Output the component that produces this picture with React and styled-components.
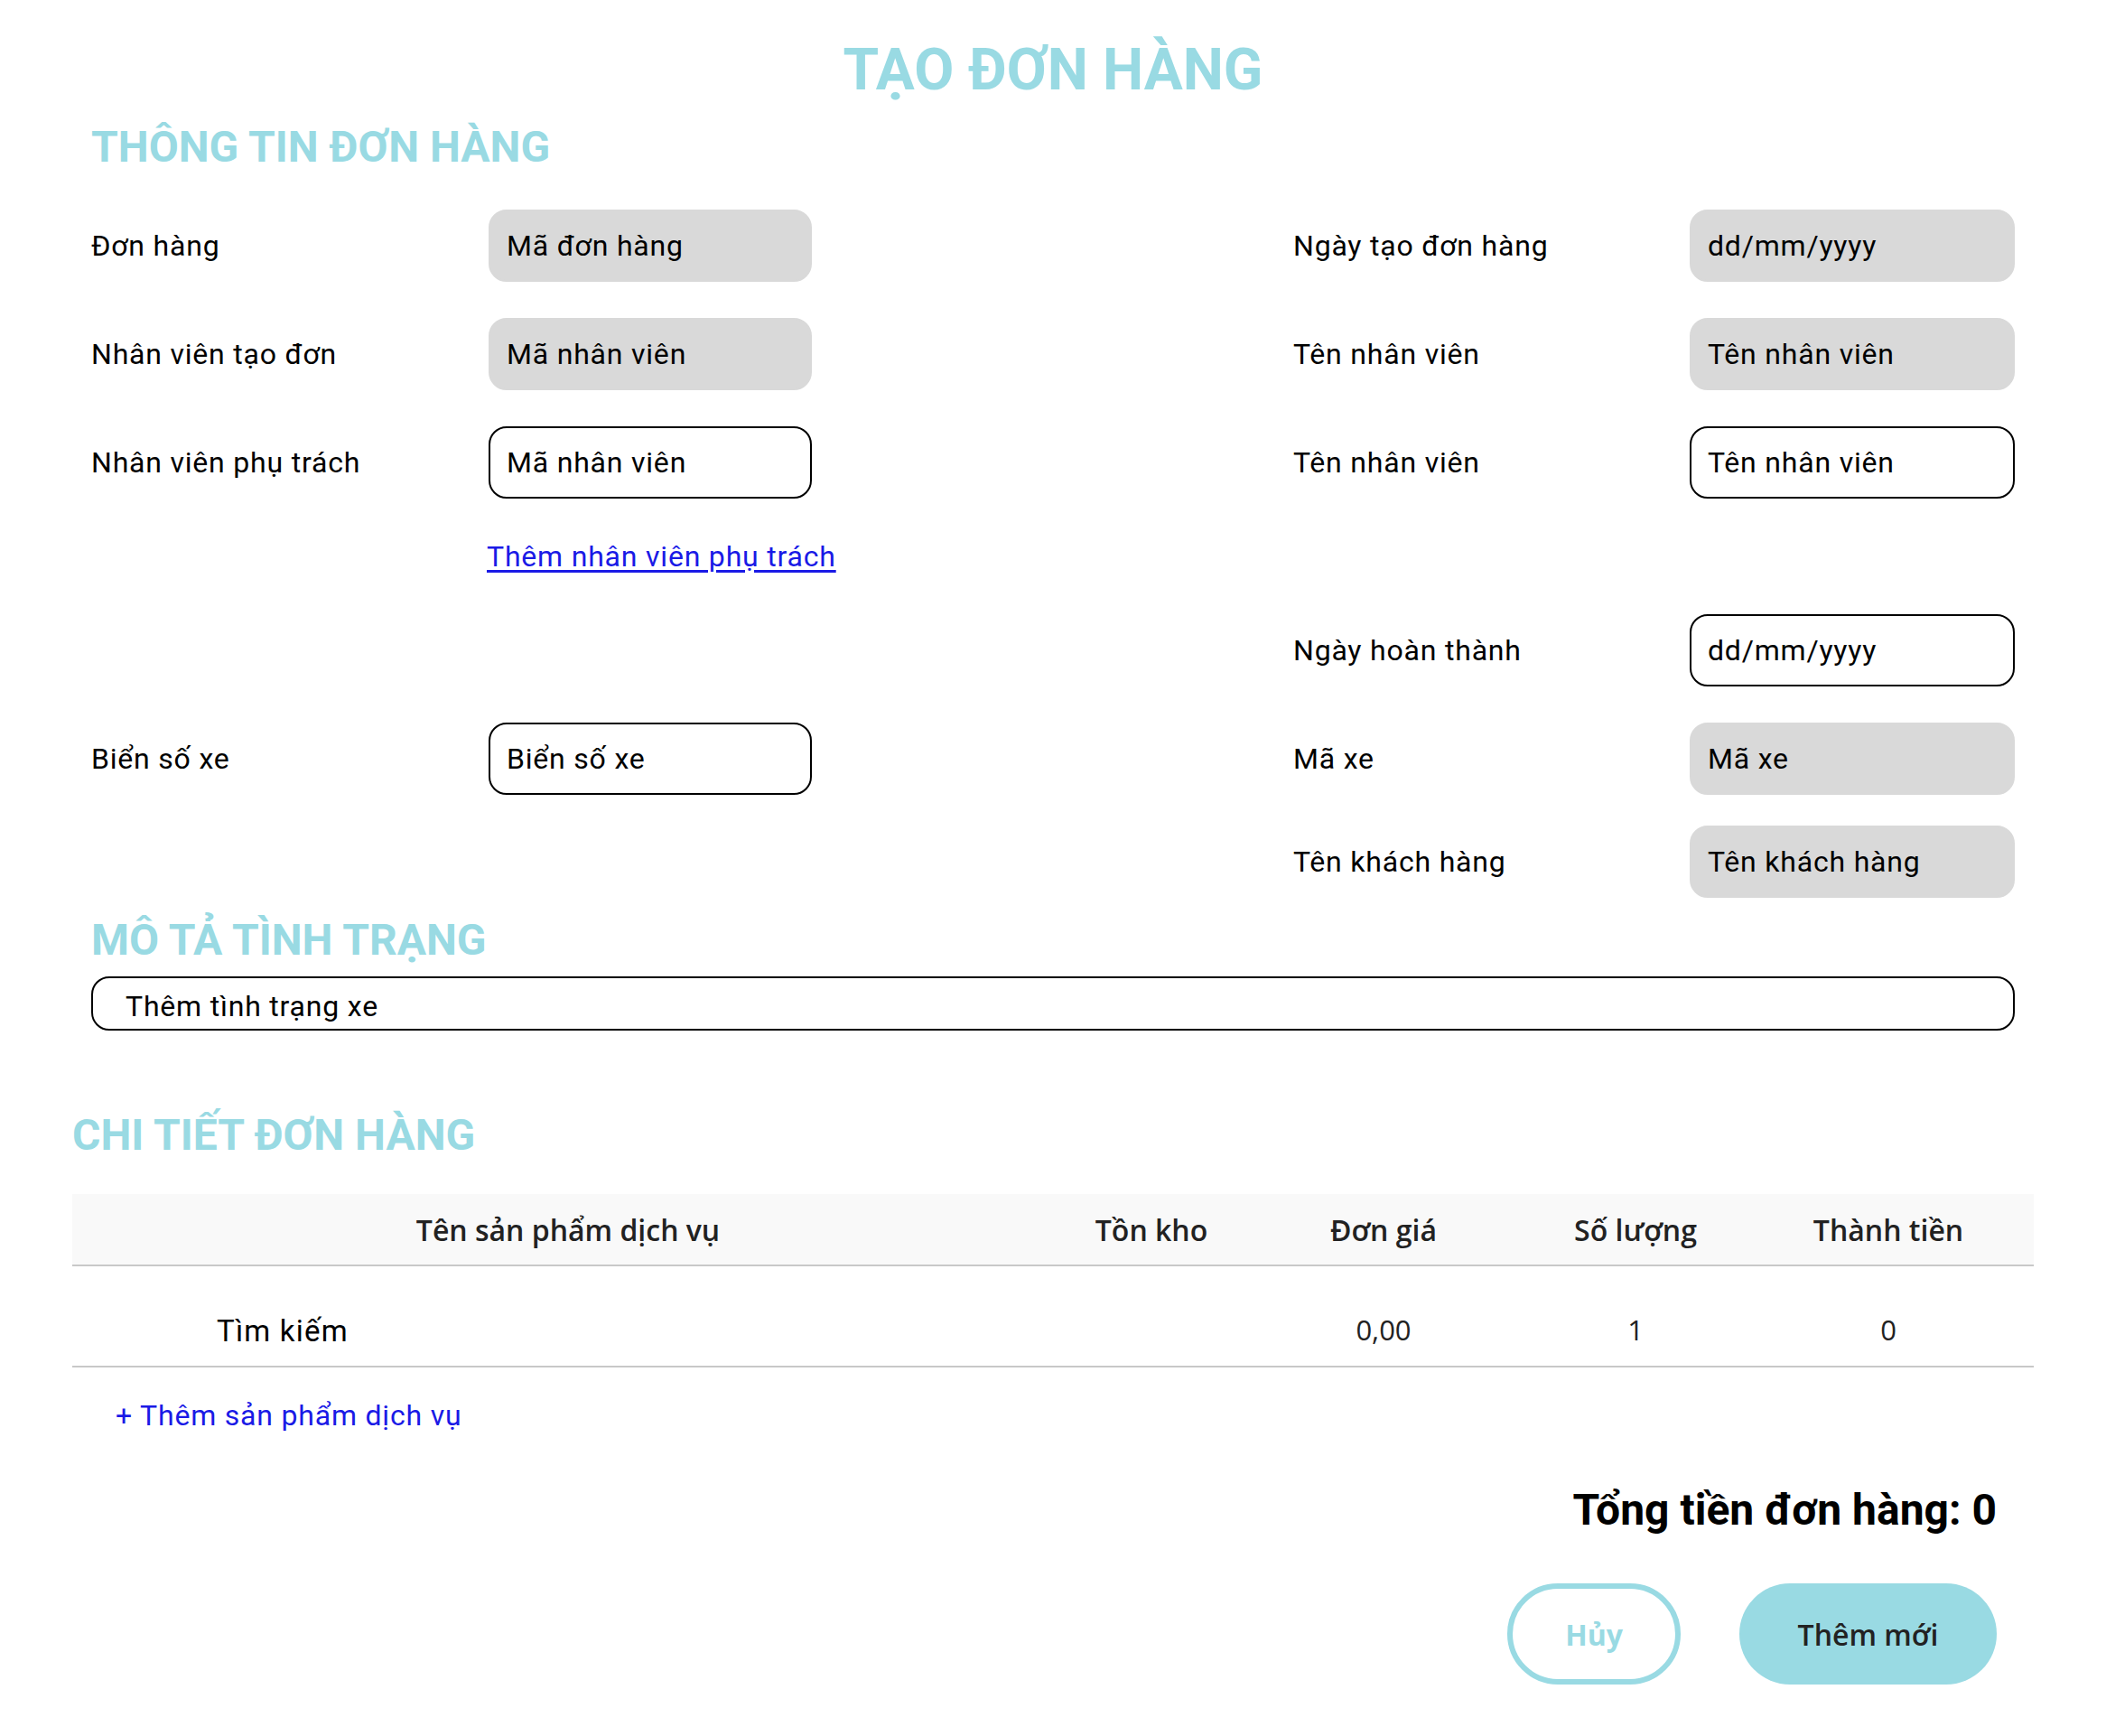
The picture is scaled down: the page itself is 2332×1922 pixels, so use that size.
import styled, { createGlobalStyle } from "styled-components";

const GlobalStyle = createGlobalStyle`
  body {
    margin: 0;
    background: #ffffff;
    font-family: Roboto, "Liberation Sans", sans-serif;
    color: #000;
  }
`;

const TEAL = "#99dae3";

const leftRows = [
    {label: "Đơn hàng", placeholder: "Mã đơn hàng", filled: true},
    {label: "Nhân viên tạo đơn", placeholder: "Mã nhân viên", filled: true},
    {label: "Nhân viên phụ trách", placeholder: "Mã nhân viên"},
];

const rightRows = [
    {label: "Ngày tạo đơn hàng", placeholder: "dd/mm/yyyy", filled: true},
    {label: "Tên nhân viên", placeholder: "Tên nhân viên", filled: true},
    {label: "Tên nhân viên", placeholder: "Tên nhân viên"},
];

const columns = ["Tên sản phẩm dịch vụ", "Tồn kho", "Đơn giá", "Số lượng", "Thành tiền"];

export default function App() {
    return (
        <Page>
            <GlobalStyle/>
            <Title>TẠO ĐƠN HÀNG</Title>

            <InfoSection>
                <SectionTitle $top={29}>THÔNG TIN ĐƠN HÀNG</SectionTitle>

                {leftRows.map((row, i) => (
                    <FormRow key={i} $top={i === 0 ? 45 : 40}>
                        <Label>{row.label}</Label>
                        <Field $filled={row.filled}>{row.placeholder}</Field>
                        <span/>
                        <Label>{rightRows[i].label}</Label>
                        <Field $filled={rightRows[i].filled}>{rightRows[i].placeholder}</Field>
                    </FormRow>
                ))}

                <LinkRow>
                    <span/>
                    <AddStaffLink href="#">Thêm nhân viên phụ trách</AddStaffLink>
                </LinkRow>

                <FormRow $top={40}>
                    <span/>
                    <span/>
                    <span/>
                    <Label>Ngày hoàn thành</Label>
                    <Field>dd/mm/yyyy</Field>
                </FormRow>

                <FormRow $top={40}>
                    <Label>Biển số xe</Label>
                    <Field>Biển số xe</Field>
                    <span/>
                    <Label>Mã xe</Label>
                    <Field $filled>Mã xe</Field>
                </FormRow>

                <FormRow $top={34}>
                    <span/>
                    <span/>
                    <span/>
                    <Label>Tên khách hàng</Label>
                    <Field $filled>Tên khách hàng</Field>
                </FormRow>

                <SectionTitle $top={23}>MÔ TẢ TÌNH TRẠNG</SectionTitle>
                <DescBox>Thêm tình trạng xe</DescBox>
            </InfoSection>

            <SectionTitle $top={92}>CHI TIẾT ĐƠN HÀNG</SectionTitle>

            <Table>
                <HeadRow>
                    {columns.map(c => <HeadCell key={c}>{c}</HeadCell>)}
                </HeadRow>
                <BodyRow>
                    <SearchCell>Tìm kiếm</SearchCell>
                    <ValueCell/>
                    <ValueCell>0,00</ValueCell>
                    <ValueCell>1</ValueCell>
                    <ValueCell>0</ValueCell>
                </BodyRow>
            </Table>

            <AddItem>+ Thêm sản phẩm dịch vụ</AddItem>

            <Footer>
                <Total>Tổng tiền đơn hàng: 0</Total>
                <Actions>
                    <CancelButton>Hủy</CancelButton>
                    <SubmitButton>Thêm mới</SubmitButton>
                </Actions>
            </Footer>
        </Page>
    );
}

const Page = styled.div`
  width: 2172px;
  margin: 0 auto;
  padding-bottom: 56px;
`

const Title = styled.h1`
  margin: 46px 0 0;
  text-align: center;
  font-size: 64px;
  line-height: 1;
  font-weight: 700;
  color: ${TEAL};
`

const InfoSection = styled.section`
  padding: 0 21px;
`

const SectionTitle = styled.h2`
  margin: ${p => p.$top}px 0 0;
  font-size: 48px;
  line-height: 1;
  font-weight: 700;
  color: ${TEAL};
`

const FormRow = styled.div`
  display: grid;
  grid-template-columns: 440px 358px 1fr 439px 360px;
  align-items: center;
  height: 80px;
  margin-top: ${p => p.$top}px;
`

const Label = styled.div`
  font-size: 32px;
  letter-spacing: 0.8px;
`

const Field = styled.div`
  box-sizing: border-box;
  height: 80px;
  display: flex;
  align-items: center;
  padding: 0 18px;
  border-radius: 20px;
  font-size: 32px;
  letter-spacing: 0.8px;
  background: ${p => p.$filled ? "#d9d9d9" : "#fff"};
  border: 2px solid ${p => p.$filled ? "#d9d9d9" : "#000"};
`

const LinkRow = styled.div`
  display: grid;
  grid-template-columns: 438px auto;
  align-items: center;
  height: 48px;
  margin-top: 40px;
`

const AddStaffLink = styled.a`
  font-size: 32px;
  letter-spacing: 0.8px;
  color: #1a1ae6;
  text-decoration: underline;
  text-underline-offset: 4px;
`

const DescBox = styled.div`
  box-sizing: border-box;
  height: 60px;
  margin-top: 16px;
  display: flex;
  align-items: center;
  padding: 5px 36px 0;
  border: 2px solid #000;
  border-radius: 20px;
  font-size: 32px;
  letter-spacing: 0.8px;
`

const Table = styled.div`
  margin-top: 41px;
  font-family: "Open Sans", "Liberation Sans", sans-serif;
`

const tableColumns = "1098px 194px 320px 238px 1fr";

const HeadRow = styled.div`
  display: grid;
  grid-template-columns: ${tableColumns};
  align-items: center;
  height: 78px;
  background: #f9f9f9;
  border-bottom: 2px solid #c8c8c8;
`

const HeadCell = styled.div`
  text-align: center;
  font-size: 32px;
  font-weight: 600;
  color: #222;
`

const BodyRow = styled.div`
  display: grid;
  grid-template-columns: ${tableColumns};
  align-items: end;
  box-sizing: border-box;
  height: 112px;
  padding-bottom: 19px;
  border-bottom: 2px solid #c8c8c8;
`

const SearchCell = styled.div`
  padding-left: 160px;
  font-family: Roboto, "Liberation Sans", sans-serif;
  font-size: 33px;
  letter-spacing: 1.2px;
`

const ValueCell = styled.div`
  text-align: center;
  font-size: 31px;
  color: #222;
`

const AddItem = styled.div`
  margin: 34px 0 0 48px;
  font-size: 32px;
  letter-spacing: 0.8px;
  color: #1a1ae6;
`

const Footer = styled.div`
  display: flex;
  flex-direction: column;
  align-items: flex-end;
  padding-right: 41px;
`

const Total = styled.div`
  margin-top: 62px;
  font-size: 48px;
  line-height: 1;
  font-weight: 700;
`

const Actions = styled.div`
  display: flex;
  gap: 65px;
  margin-top: 57px;
`

const PillButton = styled.button`
  box-sizing: border-box;
  height: 112px;
  border-radius: 56px;
  font-family: "Open Sans", "Liberation Sans", sans-serif;
  font-size: 32px;
  cursor: pointer;
`

const CancelButton = styled(PillButton)`
  width: 192px;
  background: #fff;
  border: 6px solid ${TEAL};
  color: ${TEAL};
  font-weight: 700;
`

const SubmitButton = styled(PillButton)`
  width: 285px;
  background: ${TEAL};
  border: none;
  color: #222;
  font-weight: 600;
`
